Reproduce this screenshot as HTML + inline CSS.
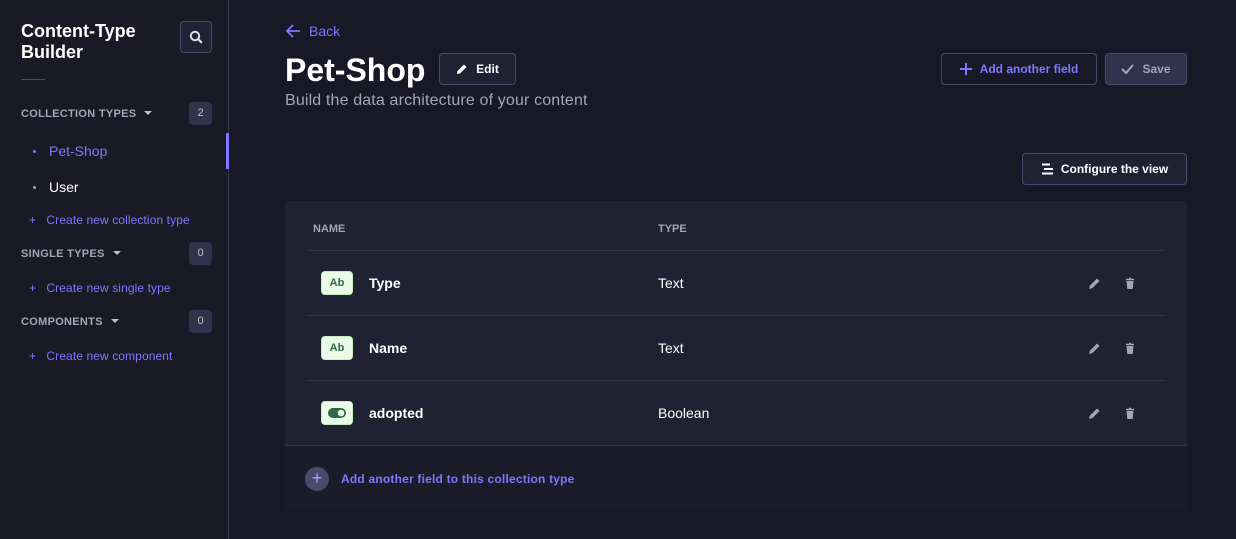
<!DOCTYPE html>
<html><head><meta charset="utf-8"><style>
*{box-sizing:border-box;margin:0;padding:0}
body{width:1236px;height:539px;overflow:hidden;background:#181826;font-family:"Liberation Sans",sans-serif;color:#fff;position:relative}
.side{position:absolute;left:0;top:0;width:229px;height:539px;background:#1a1926;border-right:1px solid #3a3a55}
.abs{position:absolute}
.title{left:21px;top:21px;font-size:18px;font-weight:bold;line-height:21px}
.search{left:180px;top:21px;width:32px;height:32px;border:1px solid #4a4a6a;border-radius:4px;background:#212134}
.hr{left:21px;top:79px;width:24px;height:1px;background:#4a4a6a}
.sec{left:21px;font-size:11px;color:#a5a5ba;letter-spacing:.3px;font-weight:600}
.badge{left:189px;width:23px;height:23px;background:#32324d;border-radius:4px;color:#c0c0cf;font-size:11px;text-align:center;line-height:23px}
.caret{display:inline-block;width:0;height:0;border-left:4px solid transparent;border-right:4px solid transparent;border-top:4px solid #c0c0cf;margin-left:8px;vertical-align:2px}
.link{font-size:12px;color:#7b79ff;letter-spacing:.1px}
.item{font-size:14px;left:33px}
.dot{display:inline-block;width:3px;height:3px;border-radius:50%;margin-right:13px;vertical-align:3px}
.btn{border:1px solid #4a4a6a;border-radius:4px;background:#212134;font-size:12px;font-weight:bold;display:flex;align-items:center;justify-content:center;gap:8px}
.panel{left:285px;top:201px;width:902px;height:308px;background:#212134;border-radius:4px;overflow:hidden}
.foot{position:absolute;left:0;top:245px;width:902px;height:63px;background:#1c1b29}
.th{font-size:11px;color:#a5a5ba;font-weight:600;top:22px}
.line{left:23px;width:856px;height:1px;background:#32324d}
.row{font-size:14px}
.ic{left:36px;width:32px;height:24px;background:#eafbe7;border:1px solid #c6f0c2;border-radius:4px;color:#2f6846;font-size:11px;font-weight:bold;text-align:center;line-height:22px}
</style></head><body>
<div class="side">
<div class="abs title">Content-Type<br>Builder</div>
<div class="abs search"><svg width="30" height="30" viewBox="0 0 30 30"><circle cx="14" cy="14" r="4.2" fill="none" stroke="#dcdce4" stroke-width="2"/><path d="M17.2 17.2l3 3" stroke="#dcdce4" stroke-width="2.2" stroke-linecap="round"/></svg></div>
<div class="abs hr"></div>
<div class="abs sec" style="top:108px">COLLECTION TYPES<span class="caret"></span></div>
<div class="abs badge" style="top:102px">2</div>
<div class="abs item" style="top:143px;color:#7b79ff"><span class="dot" style="background:#7b79ff"></span>Pet-Shop</div>
<div class="abs" style="left:226px;top:133px;width:3px;height:36px;background:#7b79ff"></div>
<div class="abs item" style="top:179px"><span class="dot" style="background:#a5a5ba"></span>User</div>
<div class="abs link" style="left:29px;top:213px">+&nbsp;&nbsp; Create new collection type</div>
<div class="abs sec" style="top:248px">SINGLE TYPES<span class="caret"></span></div>
<div class="abs badge" style="top:242px">0</div>
<div class="abs link" style="left:29px;top:281px">+&nbsp;&nbsp; Create new single type</div>
<div class="abs sec" style="top:316px">COMPONENTS<span class="caret"></span></div>
<div class="abs badge" style="top:310px">0</div>
<div class="abs link" style="left:29px;top:349px">+&nbsp;&nbsp; Create new component</div>
</div>

<div class="abs" style="left:285px;top:23px;font-size:14px;color:#7b79ff;display:flex;align-items:center;gap:8px"><svg width="16" height="16" viewBox="0 0 16 16"><path d="M15 8H2M8 2L2 8l6 6" fill="none" stroke="#7b79ff" stroke-width="1.8"/></svg>Back</div>
<div class="abs" style="left:285px;top:52px;font-size:32px;font-weight:bold">Pet-Shop</div>
<div class="abs btn" style="left:439px;top:53px;width:77px;height:32px"><svg width="12" height="12" viewBox="0 0 12 12"><path d="M1 11l.5-3L8 1.5 10.5 4 4 10.5z" fill="#fff"/></svg>Edit</div>
<div class="abs" style="left:285px;top:92px;font-size:16px;color:#a5a5ba;letter-spacing:.15px">Build the data architecture of your content</div>
<div class="abs btn" style="left:941px;top:53px;width:156px;height:32px;color:#7b79ff;background:#181826"><svg width="12" height="12" viewBox="0 0 12 12"><path d="M6 0v12M0 6h12" stroke="#7b79ff" stroke-width="2"/></svg>Add another field</div>
<div class="abs btn" style="left:1105px;top:53px;width:82px;height:32px;color:#a5a5ba;background:#32324d"><svg width="13" height="12" viewBox="0 0 13 12"><path d="M1 6l4 4 7-8" fill="none" stroke="#a5a5ba" stroke-width="2"/></svg>Save</div>
<div class="abs btn" style="left:1022px;top:153px;width:165px;height:32px"><svg width="12" height="12" viewBox="0 0 12 12"><path d="M1 1.5h8M3 6h9M1 10.5h11" stroke="#fff" stroke-width="2"/></svg>Configure the view</div>

<div class="abs panel">
<div class="foot"></div>
<div class="abs th" style="left:28px">NAME</div>
<div class="abs th" style="left:373px">TYPE</div>
<div class="abs line" style="top:49px"></div>
<div class="abs line" style="top:114px"></div>
<div class="abs line" style="top:179px"></div>
<div class="abs line" style="top:244px;left:0;width:902px"></div>
<div class="abs ic" style="top:70px">Ab</div>
<div class="abs row" style="left:84px;top:74px;font-weight:bold">Type</div>
<div class="abs row" style="left:373px;top:74px">Text</div>
<div class="abs ic" style="top:135px">Ab</div>
<div class="abs row" style="left:84px;top:139px;font-weight:bold">Name</div>
<div class="abs row" style="left:373px;top:139px">Text</div>
<div class="abs ic" style="top:200px"><svg width="18" height="10" viewBox="0 0 18 10" style="margin-top:6px"><rect width="18" height="10" rx="5" fill="#2f6846"/><circle cx="13" cy="5" r="3.3" fill="#eafbe7"/></svg></div>
<div class="abs row" style="left:84px;top:204px;font-weight:bold">adopted</div>
<div class="abs row" style="left:373px;top:204px">Boolean</div>
<div class="abs" style="left:20px;top:266px;width:24px;height:24px;border-radius:50%;background:#4a4a6a;text-align:center;line-height:23px;color:#a5a5ff;font-size:18px">+</div>
<div class="abs" style="left:56px;top:271px;font-size:12px;font-weight:bold;color:#7b79ff;letter-spacing:.2px">Add another field to this collection type</div>
</div>
<svg class="abs" style="left:1088px;top:276px" width="50" height="150" viewBox="0 0 50 150">
<g id="r"><path d="M1 13l1-3.5 7-7 2.5 2.5-7 7z" fill="#a5a5ba"/><path d="M38 3.5h8M41 2.5h2" stroke="#a5a5ba" stroke-width="1.5"/><path d="M38.5 5h7l-.8 8h-5.4z" fill="#a5a5ba"/></g>
<use href="#r" y="65"/><use href="#r" y="130"/>
</svg>
</body></html>
